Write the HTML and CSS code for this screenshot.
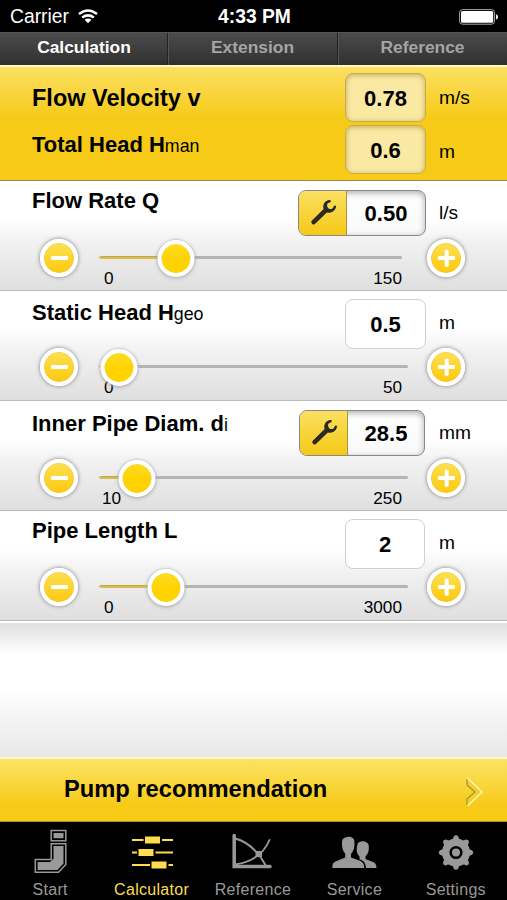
FILE: index.html
```html
<!DOCTYPE html>
<html lang="en">
<head>
<meta charset="utf-8">
<title>Pump Calculator</title>
<link rel="stylesheet" href="styles.css">
</head>
<body>
<svg width="0" height="0" class="defs" aria-hidden="true">
  <defs>
    <symbol id="wrench" viewBox="0 0 47 44"><g fill="none" stroke="#2c2a25" stroke-linecap="round"><path d="M14.6 31.2 L26.5 19.5" stroke-width="4.6"/><path d="M30.6 10.2 C25.5 11 25 15.5 27 18.2 C30 21.5 35 20 35.9 15.6" stroke-width="2.4"/></g><path d="M29.5 9.5 C24 11 23.5 16 25 18.5 L28 21.5 C32 22.5 36 20 36.4 16 C34 18.5 30.8 18.7 29 16.9 C27.3 15 28 12 30.5 10Z" fill="#2c2a25"/></symbol>
  </defs>
</svg>
<div class="app">
  <header class="status">
    <div class="carrier"><span>Carrier</span>
      <svg width="20" height="15" viewBox="0 0 20 15"><g fill="none" stroke="#fff" stroke-width="2.5"><path d="M1 5.1 Q10-2 19 5.1"/><path d="M4.2 8.6 Q10 4.2 15.8 8.6"/></g><path d="M6.6 10.7 Q10 8.2 13.4 10.7 L10 14.2Z" fill="#fff"/></svg>
    </div>
    <div class="time">4:33 PM</div>
    <div class="power"><svg width="40" height="16" viewBox="0 0 40 16"><rect x=".6" y=".6" width="35" height="14.6" rx="3" fill="none" stroke="#aaa" stroke-width="1"/><rect x="2" y="2" width="32.2" height="11.8" rx="1.5" fill="#fff"/><path d="M37 5.2 Q39 6 39 8 T37 10.6Z" fill="#fff"/></svg></div>
  </header>
  <nav class="tabs"><div class="tab active">Calculation</div><div class="tab">Extension</div><div class="tab">Reference</div></nav>

  <section class="results">
    <div class="result big"><h2>Flow Velocity v</h2><div class="value">0.78</div><span class="unit">m/s</span></div>
    <div class="result"><h2>Total Head H<small>man</small></h2><div class="value">0.6</div><span class="unit">m</span></div>
  </section>

  <main class="params">
    <section class="param flow">
      <div class="head"><h2>Flow Rate Q</h2><div class="field tool"><button class="wrench" aria-label="Flow rate helper"><svg width="47" height="44"><use href="#wrench"/></svg></button><span>0.50</span></div><span class="unit">l/s</span></div>
      <div class="control"><button class="round" aria-label="Decrease"></button><div class="slider"><div class="track"><i class="fill"></i><b class="thumb"></b></div><div class="scale"><span>0</span><span>150</span></div></div><button class="round plus" aria-label="Increase"></button></div>
    </section>
    <section class="param static">
      <div class="head"><h2>Static Head H<small>geo</small></h2><div class="field">0.5</div><span class="unit">m</span></div>
      <div class="control"><button class="round" aria-label="Decrease"></button><div class="slider"><div class="track"><i class="fill"></i><b class="thumb"></b></div><div class="scale"><span>0</span><span>50</span></div></div><button class="round plus" aria-label="Increase"></button></div>
    </section>
    <section class="param diameter">
      <div class="head"><h2>Inner Pipe Diam. d<small>i</small></h2><div class="field tool"><button class="wrench" aria-label="Pipe diameter helper"><svg width="47" height="44"><use href="#wrench"/></svg></button><span>28.5</span></div><span class="unit">mm</span></div>
      <div class="control"><button class="round" aria-label="Decrease"></button><div class="slider"><div class="track"><i class="fill"></i><b class="thumb"></b></div><div class="scale"><span>10</span><span>250</span></div></div><button class="round plus" aria-label="Increase"></button></div>
    </section>
    <section class="param length">
      <div class="head"><h2>Pipe Length L</h2><div class="field">2</div><span class="unit">m</span></div>
      <div class="control"><button class="round" aria-label="Decrease"></button><div class="slider"><div class="track"><i class="fill"></i><b class="thumb"></b></div><div class="scale"><span>0</span><span>3000</span></div></div><button class="round plus" aria-label="Increase"></button></div>
    </section>
  </main>
  <div class="spacer"></div>
  <div class="recommend"><span>Pump recommendation</span>
    <svg width="20" height="32" viewBox="0 0 20 32"><path d="M2 2 L17 16 L2 30 V23 L10 16 L2 9Z" fill="#f3cf35"/><path d="M2 9 V3 M2 9 L10 16 L2 23 V29" fill="none" stroke="#a99322" stroke-width="1.2"/><path d="M2.5 2 L17 16 L2.5 30" fill="none" stroke="#fff5b5" stroke-width="1.5"/></svg>
  </div>
  <footer class="bar">
    <div class="item"><svg width="50" height="50" viewBox="0 0 50 50"><g fill="none" stroke="#999" stroke-width="1.5"><rect x="26.2" y="4.5" width="14.6" height="10.3"/><path d="M26.2 17.8 H40.8 V38.5 L33.5 46.3 H10.3 V33.6 H26.2Z"/></g><path d="M28.5 7 H38.5 V12.3 H28.5Z M28.5 20 H38.5 V37.5 L32.4 44 H12.6 V36 H25 L28.5 32.5Z" fill="#999"/></svg><span>Start</span></div>
    <div class="item active"><svg width="50" height="50" viewBox="0 0 50 50"><path d="M5 14 H16.5 M35 14 H46 M5 26.5 H10 M28.5 26.5 H46 M5 39 H23 M41.5 39 H46" stroke="#fddc50" stroke-width="2"/><path d="M18 10.5 H33 V17.5 H18Z M11.5 23 H26.5 V30 H11.5Z M24.5 35.5 H39.5 V42.5 H24.5Z" fill="#fddc50"/></svg><span>Calculator</span></div>
    <div class="item"><svg width="50" height="50" viewBox="0 0 50 50"><g fill="none" stroke="#999" stroke-linecap="round"><path d="M6.2 9.5 V40.5 H42" stroke-width="3.5"/><path d="M7 12.5 C21 16 31 27 38 40 M7 38.5 C25 36 36 27 41.5 14" stroke-width="1.9"/></g><rect x="27.5" y="25" width="6.5" height="6" fill="#999"/></svg><span>Reference</span></div>
    <div class="item"><svg width="50" height="50" viewBox="0 0 50 50"><path d="M3.3 42 Q3 36.5 7 35.2 L16.3 31.5 V27.5 C13.5 25 12.8 20 13 16 C13.2 12 15.5 11.8 18 10.9 C23 10 25.5 12.3 25.5 16.5 C25.5 21 25 25 22 28 V31.5 L31 34.8 C34.7 36.5 35 39 35.3 42Z" fill="#999"/><path d="M28.8 17.3 C31 14 39.4 14.5 39.8 20 C40.2 25 39 28 36.5 30.2 V33 L44 36 Q47.5 37.3 47.5 42 H37 C36.5 36 34 34.2 30.5 33.2 V30.5 C26.7 27 27.5 22 28.8 17.3Z" fill="#999"/></svg><span>Service</span></div>
    <div class="item"><svg width="50" height="50" viewBox="0 0 50 50"><g fill="#999"><circle cx="25" cy="26.5" r="14"/><g id="teeth"><path d="M20.5 14 Q22.5 13 22.7 10.5 Q25 8 27.3 10.5 Q27.5 13 29.5 14 V39 Q27.5 40 27.3 42.5 Q25 45 22.7 42.5 Q22.5 40 20.5 39Z"/></g><use href="#teeth" transform="rotate(45 25 26.5)"/><use href="#teeth" transform="rotate(90 25 26.5)"/><use href="#teeth" transform="rotate(135 25 26.5)"/></g><circle cx="25" cy="26.5" r="5.3" fill="#999" stroke="#000" stroke-width="2.5"/></svg><span>Settings</span></div>
  </footer>
</div>
</body>
</html>
```
FILE: styles.css
```css
* { box-sizing: border-box; }
body { margin: 0; background: #000; font-family: "Liberation Sans", Arial, sans-serif; color: #000; }
button { padding: 0; font: inherit; }
h2 { margin: 0; font-size: 22px; line-height: 26px; font-weight: 700; flex: 1; white-space: nowrap; }
h2 small { font-size: 17.8px; font-weight: 400; }
.defs { position: absolute; }
.app { width: 507px; height: 900px; display: flex; flex-direction: column; overflow: hidden; }
.status { height: 32px; flex: none; display: grid; grid-template-columns: 1fr auto 1fr; align-items: center; padding: 1px 8px 0 10px; color: #fff; font-size: 19.3px; }
.carrier { display: flex; align-items: center; gap: 9px; }
.time { font-weight: 700; }
.power { display: flex; justify-content: flex-end; }
.tabs { height: 33px; flex: none; display: grid; grid-template-columns: 168px 170px 169px; background: linear-gradient(#4b4b4b, #303030); border-top: 1px solid #555; }
.tab { color: #a5a5a5; font-size: 17.4px; font-weight: 700; line-height: 29px; text-align: center; border-right: 1px solid #222; box-shadow: 1px 0 #555; }
.tab:last-child { border: 0; }
.tab.active { color: #fff; padding-left: 1px; }
.results { height: 116px; flex: none; border-top: 2px solid #fff7be; border-bottom: 1px solid #998b45; background: linear-gradient(#fbe064, #f6ca17 46%, #f6ca17); padding: 6px 0 0 32px; }
.result { display: flex; height: 52px; align-items: flex-start; }
.result h2 { padding-top: 7px; }
.result.big h2 { font-size: 23.5px; padding-top: 12px; }
.value { width: 81px; height: 49px; margin-left: -1px; border-radius: 8px; border: 1px solid #c7ad4b; background: #fae9a3; box-shadow: inset 0 1px 5px #bfa75b; text-align: center; font-weight: 700; font-size: 22px; line-height: 49px; }
.unit { width: 81px; padding-left: 13px; font-size: 19.2px; line-height: 22px; }
.result .unit { padding-top: 14px; }
.result:last-child .unit { padding-top: 16px; }
.params { flex: none; }
.param { height: 110px; border-bottom: 1px solid #bababa; background: linear-gradient(#fff 35%, #f2f2f2 55%, #dfdfdf); box-shadow: inset 0 1px #fff; }
.head { display: flex; height: 58px; align-items: flex-start; padding-left: 32px; }
.flow h2 { padding-top: 7px; }
.static h2 { padding-top: 9px; }
.diameter h2 { padding-top: 10px; }
.length h2 { padding-top: 7px; }
.head .unit { padding-top: 21px; }
.field { width: 81px; height: 50px; margin-top: 8px; border-radius: 8px; border: 1px solid #d0d0d0; background: #fff; text-align: center; font-size: 22px; line-height: 49px; font-weight: 700; }
.tool { width: 128px; height: 46px; margin-top: 9px; display: flex; overflow: hidden; border: 1.5px solid #888; background: linear-gradient(#fff, #f9f9f9); box-shadow: inset 0 2px 6px #aaa; line-height: 45px; }
.tool span { flex: 1; }
.wrench { width: 48px; flex: none; border: 0; border-right: 1px solid #aa943d; background: linear-gradient(#fbdf61, #f5c916); display: flex; }
.diameter .tool { width: 126px; margin: 9px 1px 0 0; }
.length .field { width: 80px; margin-right: 1px; }
.control { display: flex; height: 38px; padding-left: 40px; align-items: flex-start; }
.static .control, .length .control { margin-top: -1px; }
.round { width: 38px; height: 38px; flex: none; position: relative; border: 4px solid #fff; border-radius: 50%; background: linear-gradient(#fce052, #fdc90d); background-clip: padding-box; box-shadow: inset 0 0 1px #d5a100, 0 0 4px #777; }
.round::before, .plus::after { content: ""; position: absolute; left: 6.5px; top: 12.8px; width: 17px; height: 4.4px; border-radius: 1px; background: #fff; }
.plus::after { transform: rotate(90deg); }
.slider { width: 304px; margin: 0 25px 0 20px; }
.static .slider, .diameter .slider, .length .slider { width: 310px; margin-right: 19px; }
.track { height: 38px; position: relative; display: flex; align-items: center; z-index: 1; }
.track::before { content: ""; position: absolute; left: 2px; right: 0; top: 17px; height: 3px; border-radius: 2px; background: #b4b4b4; }
.fill { position: absolute; top: 17px; left: 0; height: 3px; background: #d8bd4c; border-top: 1px solid #bfa848; clip-path: polygon(0 50%, 4px 0, 100% 0, 100% 100%, 4px 100%); }
.thumb { position: absolute; width: 37px; height: 37px; border: 4px solid #fff; border-radius: 50%; background: linear-gradient(#fedb24, #ffd300 55%); background-clip: padding-box; box-shadow: 0 0 2px #aaa, 0 1px 4px #aaa; transform: translateX(-50%); }
.flow .fill, .flow .thumb { --value: 78px; }
.static .fill, .static .thumb { --value: 21px; }
.diameter .fill, .diameter .thumb { --value: 38.5px; }
.length .fill, .length .thumb { --value: 68px; }
.fill { width: var(--value); }
.thumb { left: var(--value); }
.scale { display: flex; justify-content: space-between; padding: 0 0 0 6px; margin-top: -9px; font-size: 17.2px; line-height: 20px; }
.static .scale, .diameter .scale, .length .scale { padding-right: 6px; }
.diameter .scale { padding-left: 4px; }
.spacer { flex: 1; border-top: 2px solid #fff; background: linear-gradient(#dfdfdf, #fff 23%, #fff 50%, #e7e7e7); }
.recommend { height: 65px; flex: none; border-top: 2px solid #fff9d6; border-bottom: 1px solid #ad9330; background: linear-gradient(#fce365, #f6ca17 75%, #f6ca17); display: flex; align-items: center; justify-content: space-between; padding: 0 22px 0 64px; font-weight: 700; font-size: 23.7px; }
.recommend span { margin-top: -1px; }
.recommend svg { margin-top: 3px; }
.bar { height: 78px; flex: none; display: grid; grid-template-columns: repeat(5, 1fr); background: #000; color: #999; font-size: 16px; letter-spacing: .3px; }
.item { display: flex; flex-direction: column; align-items: center; padding-top: 4px; margin-left: -1px; }
.item span { line-height: 20px; margin-top: 4px; }
.item.active { color: #fddc50; }
```
